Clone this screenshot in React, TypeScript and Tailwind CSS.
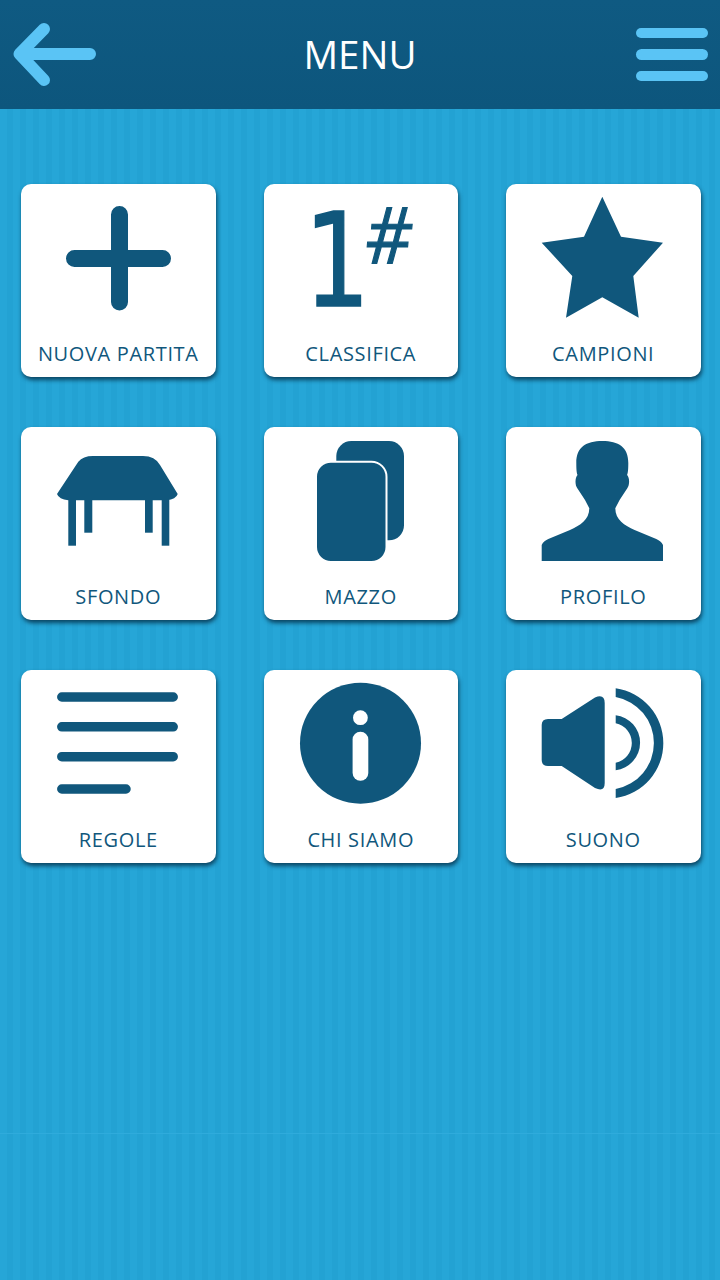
import React from 'react';

const DARK = '#10577c';

const Icon = ({ children }: { children: React.ReactNode }) => (
  <svg width="194" height="150" viewBox="0 0 194 150" className="block shrink-0">
    {children}
  </svg>
);

const PlusIcon = () => (
  <Icon>
    <path d="M98.5 30.5V118M53.5 74.5H141.5" fill="none" stroke={DARK} strokeWidth="17" strokeLinecap="round" />
  </Icon>
);

// il "1#" resta testo vero
const RankIcon = () => (
  <div className="w-[194px] h-[150px] shrink-0 flex items-start pl-[40px] text-[#10577c]">
    <span className="block w-[59px] h-[96px] mt-[29px] origin-left scale-x-[0.8] font-['DejaVu_Sans',sans-serif] text-[130px] leading-[96px] [-webkit-text-stroke:1.5px_#10577c]">
      1
    </span>
    <span className="block h-[57px] mt-[22px] ml-[2px] origin-left scale-x-[0.93] font-['Open_Sans',sans-serif] italic text-[78px] leading-[57px] [-webkit-text-stroke:1.2px_#10577c]">
      #
    </span>
  </div>
);

const StarIcon = () => (
  <Icon>
    <polygon
      fill={DARK}
      points="96.3,12.7 115,52.7 157,58.7 127.3,92 132.7,133.7 96.3,113.3 60,133.7 66.3,92 35.7,58.7 78,52.7"
    />
  </Icon>
);

const TableIcon = () => (
  <Icon>
    <g fill={DARK}>
      <path d="M36 67L57.3 34.7Q62 29 72 29H122Q134 29 139 38L156.7 67Q155 72.5 145.7 73.3H47.3Q38 72.5 36 67Z" />
      <rect x="47.3" y="72" width="7.7" height="46.7" />
      <rect x="63.3" y="72" width="8" height="33.7" />
      <rect x="124" y="72" width="7.7" height="33.7" />
      <rect x="140.7" y="72" width="7.6" height="46.7" />
    </g>
  </Icon>
);

const DeckIcon = () => (
  <Icon>
    <g fill={DARK}>
      <rect x="72.3" y="14" width="67.7" height="99.3" rx="15" />
      <rect x="52" y="34.7" width="70.5" height="100.3" rx="15" stroke="#fff" strokeWidth="2" />
    </g>
  </Icon>
);

const ProfileIcon = () => (
  <Icon>
    <path
      fill={DARK}
      d="M35.7 134V118C37 115 39 113.5 42.3 112L64 103C74 98.5 83.3 93 83.3 81.3L79 73L71.3 61.3C70 59.5 69.5 57 69.5 54.5C69.5 51.5 70.5 49 71.5 48C70.8 46 70.3 44 70.3 36C70.3 20 80 14 96.3 14C112.6 14 122.3 20 122.3 36C122.3 44 121.8 46 121.1 48C122.1 49 123.1 51.5 123.1 54.5C123.1 57 122.6 59.5 121.3 61.3L113.6 73L109.3 81.3C109.3 93 118.6 98.5 128.6 103L150.3 112C153.6 113.5 155.6 115 157 118V134Z"
    />
  </Icon>
);

const RulesIcon = () => (
  <Icon>
    <path
      d="M40.8 27H152.2M40.8 56.8H152.2M40.8 86.7H152.2M40.8 119H105"
      stroke={DARK}
      strokeWidth="9.5"
      strokeLinecap="round"
      fill="none"
    />
  </Icon>
);

const InfoIcon = () => (
  <Icon>
    <circle cx="96.5" cy="73.2" r="60.5" fill={DARK} />
    <circle cx="96.4" cy="47.7" r="7.4" fill="#fff" />
    <rect x="88.6" y="61.7" width="15.7" height="49" rx="7.8" fill="#fff" />
  </Icon>
);

const SoundIcon = () => (
  <Icon>
    <g fill={DARK}>
      <path d="M42 49H55.7L89 27.5Q98.7 23.5 98.7 33V113Q98.7 122.5 89 118L55.7 96H42Q35.7 96 35.7 90V55Q35.7 49 42 49Z" />
      <path d="M109.7 18.3A55.4 55.4 0 0 1 109.7 128V119A46.8 46.8 0 0 0 109.7 27Z" />
      <path d="M109.7 45.2A27.7 27.7 0 0 1 109.7 100.2V92.7A20.1 20.1 0 0 0 109.7 53.3Z" />
    </g>
  </Icon>
);

const MENU_ITEMS = [
  { label: 'NUOVA PARTITA', icon: <PlusIcon /> },
  { label: 'CLASSIFICA', icon: <RankIcon /> },
  { label: 'CAMPIONI', icon: <StarIcon /> },
  { label: 'SFONDO', icon: <TableIcon /> },
  { label: 'MAZZO', icon: <DeckIcon /> },
  { label: 'PROFILO', icon: <ProfileIcon /> },
  { label: 'REGOLE', icon: <RulesIcon /> },
  { label: 'CHI SIAMO', icon: <InfoIcon /> },
  { label: 'SUONO', icon: <SoundIcon /> },
];

export default function App() {
  return (
    <div className="w-[720px] h-[1280px] overflow-hidden font-['Open_Sans',sans-serif] bg-[repeating-linear-gradient(90deg,#26a6d7_0px,#26a6d7_7px,#23a2d3_7px,#23a2d3_13px)]">
      {/* Header */}
      <header className="h-[109px] bg-gradient-to-b from-[#0f5a82] to-[#0d567d] grid grid-cols-3 items-center">
        <button className="justify-self-start">
          <svg width="110" height="109" viewBox="0 0 110 109" className="block">
            <path
              d="M90 54H20M44 29L19.5 54L44 80"
              fill="none"
              stroke="#5ac4f5"
              strokeWidth="12"
              strokeLinecap="round"
              strokeLinejoin="round"
            />
          </svg>
        </button>
        <h1 className="text-center text-[38.5px] leading-none text-white">MENU</h1>
        <button className="justify-self-end mr-3 w-[72px] flex flex-col gap-[11px]">
          <span className="block h-[10.5px] rounded-full bg-[#5ac4f5]" />
          <span className="block h-[10.5px] rounded-full bg-[#5ac4f5]" />
          <span className="block h-[10.5px] rounded-full bg-[#5ac4f5]" />
        </button>
      </header>

      {/* Grid Area */}
      <main className="h-[1025px] border-b border-[#2fabdc] pt-[75px] pl-[21px] pr-[19.5px]">
        <div className="grid grid-cols-3 gap-x-[48px] gap-y-[50px]">
          {MENU_ITEMS.map(item => (
            <button
              key={item.label}
              className="h-[193px] bg-white rounded-[10px] shadow-[1px_3px_4px_rgba(6,52,78,0.85)] flex flex-col items-center"
            >
              {item.icon}
              <span className="mt-[7.5px] text-[20px] leading-[24px] tracking-[0.65px] text-[#10577c] whitespace-nowrap">
                {item.label}
              </span>
            </button>
          ))}
        </div>
      </main>
    </div>
  );
}
